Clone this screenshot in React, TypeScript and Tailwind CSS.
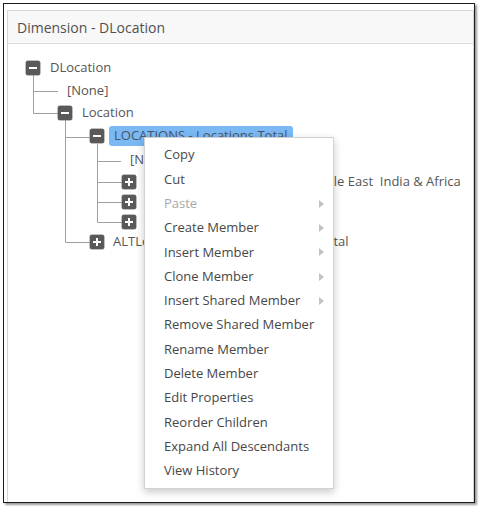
import React from 'react';

type IconKind = 'minus' | 'plus';

const ToggleIcon: React.FC<{ kind: IconKind }> = ({ kind }) => (
  <span className="relative flex h-[14px] w-[14px] shrink-0 items-center justify-center rounded-[2px] bg-[#595959] shadow-[0_0_0_0.5px_#8a7a70]">
    <span className="absolute h-[2px] w-[8px] bg-white" />
    {kind === 'plus' && <span className="absolute h-[8px] w-[2px] bg-white" />}
  </span>
);

const MenuArrow = () => (
  <svg width="5" height="8" viewBox="0 0 5 8" className="absolute right-[9px] top-1/2 -translate-y-1/2">
    <path d="M0 0 L5 4 L0 8 Z" fill="#c2c2c2" />
  </svg>
);

const menuItems: { label: string; disabled?: boolean; sub?: boolean }[] = [
  { label: 'Copy' },
  { label: 'Cut' },
  { label: 'Paste', disabled: true, sub: true },
  { label: 'Create Member', sub: true },
  { label: 'Insert Member', sub: true },
  { label: 'Clone Member', sub: true },
  { label: 'Insert Shared Member', sub: true },
  { label: 'Remove Shared Member' },
  { label: 'Rename Member' },
  { label: 'Delete Member' },
  { label: 'Edit Properties' },
  { label: 'Reorder Children' },
  { label: 'Expand All Descendants' },
  { label: 'View History' },
];

// connector lines, coordinates relative to the tree box (page x - 8, page y - 44)
const lines: [number, number, number, number][] = [
  [25.5, 31, 25.5, 69.5],
  [25.5, 47.5, 50, 47.5],
  [25.5, 69.5, 50, 69.5],
  [57.5, 76, 57.5, 198.5],
  [57.5, 93.5, 82, 93.5],
  [57.5, 198.5, 82, 198.5],
  [89.5, 100, 89.5, 178.5],
  [89.5, 117.5, 113, 117.5],
  [89.5, 138.5, 114, 138.5],
  [89.5, 158.5, 114, 158.5],
  [89.5, 178.5, 114, 178.5],
];

export default function App() {
  return (
    <div className="relative h-[513px] w-[484px] bg-white font-['Open_Sans','Noto_Sans',sans-serif] text-[13px] text-[#555]">
      <div className="ml-[3px] pt-[3px]">
        <div className="flex h-[500px] w-[472px] flex-col border border-[#1c1c1c] pl-[3px] pt-[6px] shadow-[2px_2px_2px_rgba(0,0,0,0.4)]">
          <div className="flex flex-1 flex-col border-l border-t border-r border-[#d6d6d6]">
            <div className="flex h-[33px] items-center border-b border-[#dcdcdc] bg-[#f8f8f8] pl-[9px] text-[14px] text-[#505050]">
              Dimension - DLocation
            </div>
            <div className="relative flex-1 pt-[13px]">
              <svg className="absolute left-0 top-0" width="400" height="220">
                {lines.map(([x1, y1, x2, y2], i) => (
                  <line key={i} x1={x1} y1={y1} x2={x2} y2={y2} stroke="#a0a0a0" strokeWidth="1" />
                ))}
              </svg>

              <div className="relative flex h-[22px] items-center pl-[18px]">
                <ToggleIcon kind="minus" />
                <span className="ml-[10px]">DLocation</span>
              </div>
              <div className="relative flex h-[23px] items-center pl-[59px]">
                <span>[None]</span>
              </div>
              <div className="relative flex h-[22px] items-center pl-[50px]">
                <ToggleIcon kind="minus" />
                <span className="ml-[10px]">Location</span>
              </div>
              <div className="relative flex h-[24px] items-center pl-[82px]">
                <ToggleIcon kind="minus" />
                <span className="ml-[5px] flex h-[20px] items-center rounded-[3px] bg-[#7ab9f4] px-[5px] text-[#4a5563]">
                  LOCATIONS - Locations Total
                </span>
              </div>
              <div className="relative flex h-[24px] items-center pl-[122px]">
                <span>[None]</span>
              </div>
              <div className="relative flex h-[20px] items-center pl-[114px]">
                <ToggleIcon kind="plus" />
                <span className="ml-[10px] whitespace-pre">EMEIA_REGIONS - Europe Middle East  India &amp; Africa</span>
              </div>
              <div className="relative flex h-[20px] items-center pl-[114px]">
                <ToggleIcon kind="plus" />
                <span className="ml-[10px]">APAC - Asia Pacific</span>
              </div>
              <div className="relative flex h-[20px] items-center pl-[114px]">
                <ToggleIcon kind="plus" />
                <span className="ml-[10px]">AMER - Americas</span>
              </div>
              <div className="relative flex h-[20px] items-center pl-[82px]">
                <ToggleIcon kind="plus" />
                <span className="ml-[9px]">ALTLocations - Alternate Location Total</span>
              </div>
            </div>
          </div>
        </div>
      </div>

      <div className="absolute left-[144px] top-[137px] w-[190px] border border-[#d2d2d2] bg-white py-[5px] shadow-[0_3px_8px_rgba(0,0,0,0.22)]">
        {menuItems.map((item) => (
          <div
            key={item.label}
            className={`relative flex h-[24.3px] items-center pl-[19px] text-[13px] ${item.disabled ? 'text-[#a8a8a8]' : 'text-[#474747]'}`}
          >
            {item.label}
            {item.sub && <MenuArrow />}
          </div>
        ))}
      </div>
    </div>
  );
}
